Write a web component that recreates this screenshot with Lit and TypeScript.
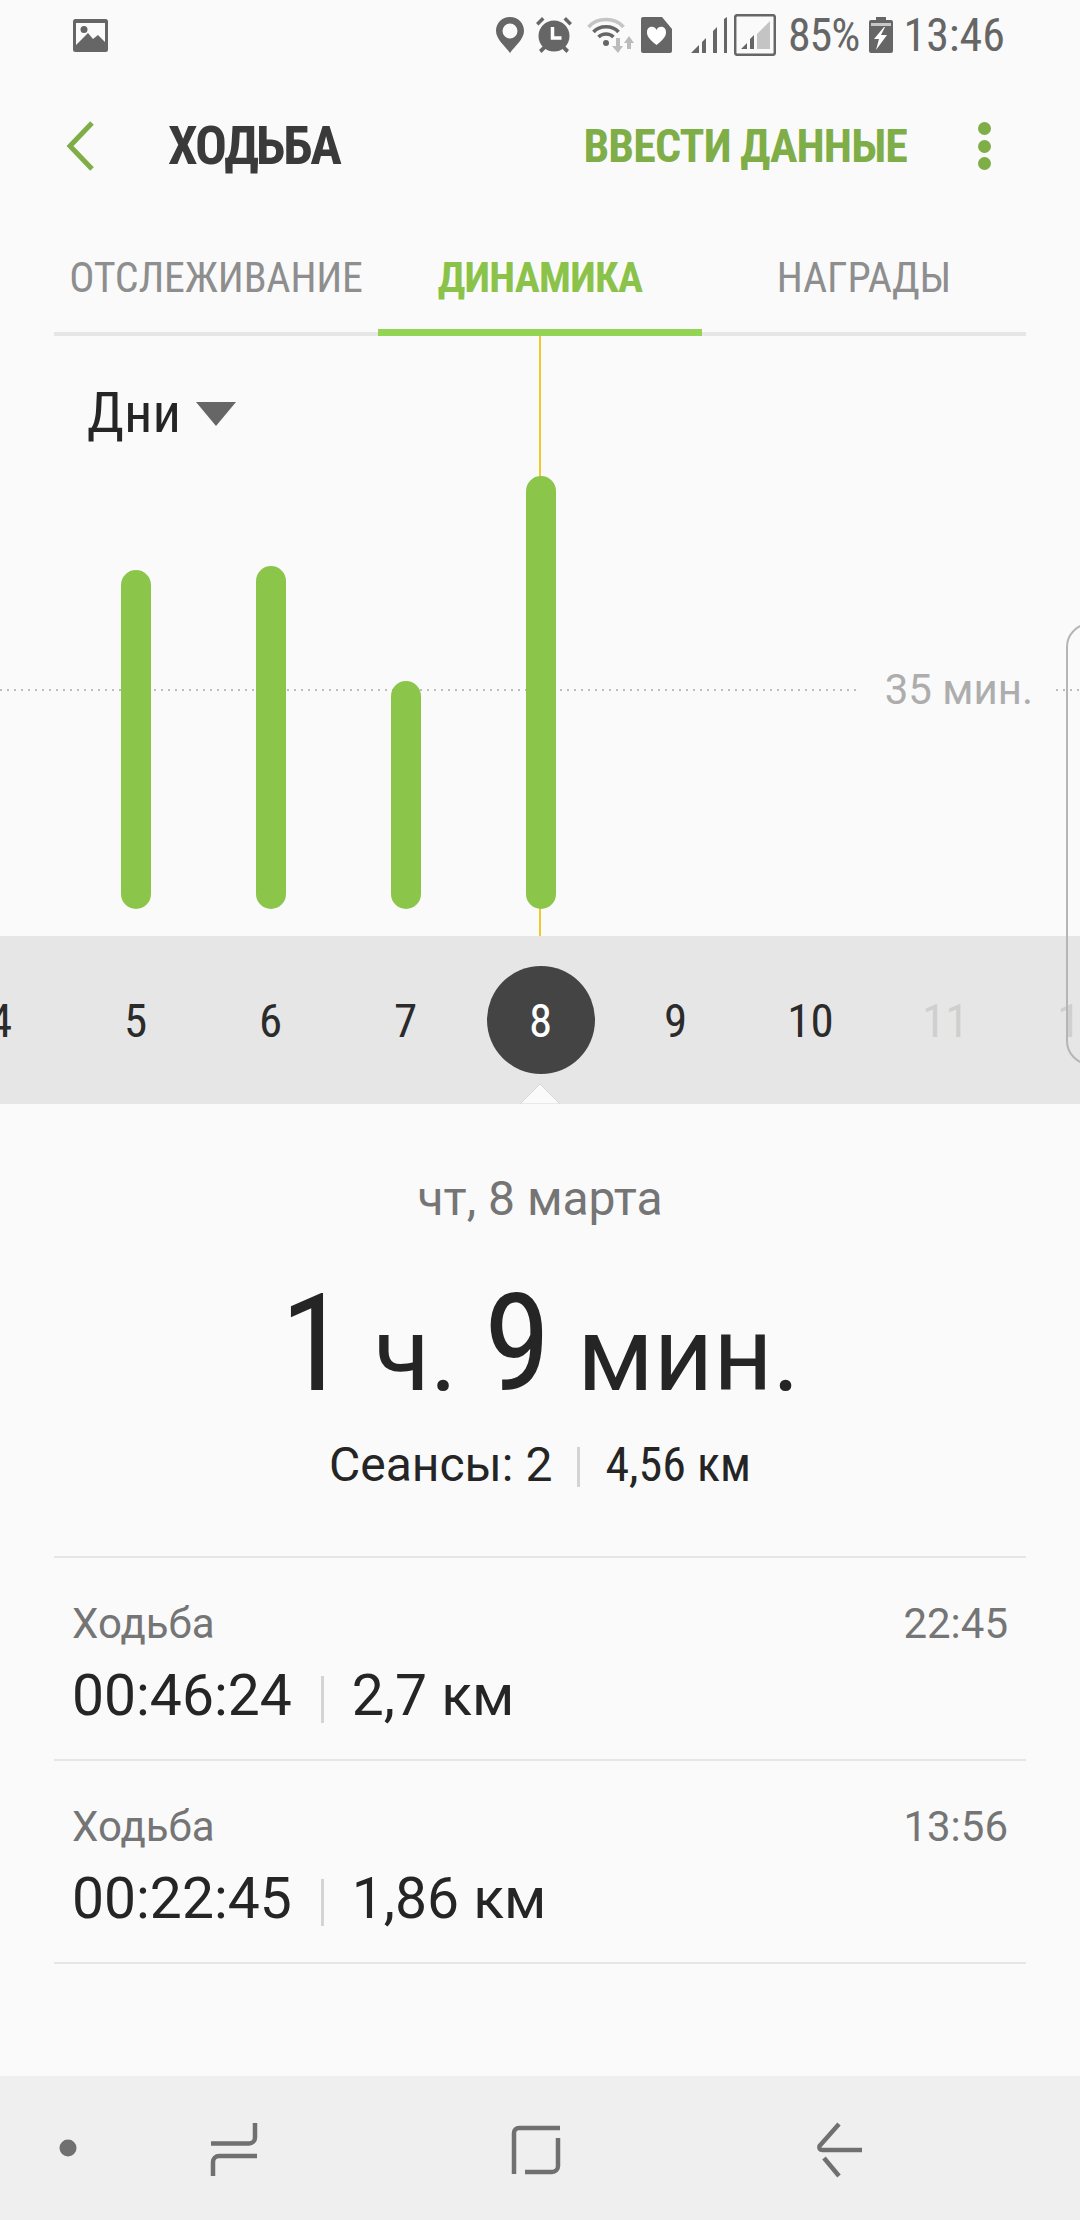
import { LitElement, html, css, svg } from "lit";
import { customElement } from "lit/decorators.js";

const bars = [
  { day: "5", h: 339 },
  { day: "6", h: 343 },
  { day: "7", h: 228 },
  { day: "8", h: 433 },
];
const days = [
  { d: "4", c: "" },
  { d: "5", c: "" },
  { d: "6", c: "" },
  { d: "7", c: "" },
  { d: "8", c: "sel" },
  { d: "9", c: "" },
  { d: "10", c: "" },
  { d: "11", c: "off" },
  { d: "12", c: "off" },
];
const sessions = [
  { t: "22:45", dur: "00:46:24", km: "2,7 км" },
  { t: "13:56", dur: "00:22:45", km: "1,86 км" },
];

@customElement("app-root")
export class AppRoot extends LitElement {
  static styles = css`
    :host { display: block; width: 1080px; height: 2220px; background: #fafafa; font-family: Roboto, sans-serif; overflow: hidden; position: relative; color: #252525; }
    .status { height: 70px; display: flex; align-items: center; padding: 0 75px 0 73px; color: #666; }
    .status svg { display: block; flex: none; }
    .status .right { margin-left: auto; display: flex; align-items: center; font-size: 46px; font-stretch: 75%; height: 70px; }
    .status .pct { margin: 0 10px 0 12px; letter-spacing: -1px; }
    .status .clock { margin-left: 10px; }
    .header { height: 152px; display: flex; align-items: center; }
    .back { margin-left: 66px; width: 30px; height: 52px; flex: none; }
    .title { margin-left: 72px; font-size: 53px; font-weight: 700; font-stretch: 75%; letter-spacing: -2px; color: #3a3a3a; }
    .action { margin-left: auto; font-size: 46px; font-weight: 700; font-stretch: 75%; letter-spacing: -0.9px; color: #7fae48; }
    .more { margin: 0 89px 0 70px; width: 14px; height: 48px; display: flex; flex-direction: column; justify-content: space-between; align-items: center; }
    .more i { width: 13px; height: 13px; border-radius: 50%; background: #7fae48; display: block; }
    .tabs { margin: 0 54px; height: 114px; display: flex; border-bottom: 4px solid #e6e6e6; box-sizing: border-box; }
    .tab { font-size: 42px; font-stretch: 75%; letter-spacing: -0.2px; color: #8e8e8e; display: flex; align-items: center; justify-content: center; flex: 1; position: relative; }
    .tab.on { color: #8bc34a; font-weight: 700; letter-spacing: -0.7px; }
    .tab.on::after { content: ""; position: absolute; left: 0; right: 0; bottom: -4px; height: 7px; background: #94d454; }
    .chart { height: 600px; position: relative; }
    .range { position: absolute; left: 87px; top: 44px; display: flex; align-items: center; gap: 15px; font-size: 56px; font-stretch: 75%; color: #252525; }
    .range i { width: 0; height: 0; border-left: 20px solid transparent; border-right: 20px solid transparent; border-top: 24px solid #666; margin-top: 2px; }
    .now { position: absolute; left: 539px; top: 0; bottom: 0; width: 2px; background: #f0c92a; }
    .goal { position: absolute; left: 0; right: 0; top: 332px; height: 44px; display: flex; align-items: center; }
    .goal .dots { flex: 1; height: 2px; background: repeating-linear-gradient(90deg, #bdbdbd 0 2px, transparent 2px 7px); }
    .goal .dots.end { flex: none; width: 24px; }
    .goal span { font-size: 42px; line-height: 44px; color: #adadad; margin: 0 23px 0 25px; }
    .barrow { position: absolute; left: 68px; bottom: 27px; display: flex; align-items: flex-end; }
    .col { width: 135px; display: flex; justify-content: center; }
    .bar { width: 30px; background: #8bc64b; border-radius: 15px; }
    .strip { height: 168px; background: #e6e6e6; position: relative; overflow: hidden; }
    .dayrow { display: flex; position: absolute; left: -67px; top: 0; height: 168px; }
    .day { width: 135px; display: flex; align-items: center; justify-content: center; font-size: 47px; font-stretch: 75%; color: #2b2b2b; }
    .day.off { color: #cfcfcf; }
    .day.sel b { width: 108px; height: 108px; border-radius: 50%; background: #444; color: #fff; font-weight: 400; display: flex; align-items: center; justify-content: center; }
    .notch { position: absolute; left: 520px; bottom: 0; width: 40px; height: 20px; }
    .sum { text-align: center; }
    .date { margin-top: 67px; font-size: 48px; color: #757575; line-height: 56px; }
    .big { margin-top: 37px; height: 160px; line-height: 160px; font-size: 103px; word-spacing: 1px; color: #252525; white-space: nowrap; }
    .big b { font-weight: 400; font-size: 136px; font-stretch: 75%; }
    .meta { margin-top: 14px; display: flex; justify-content: center; align-items: center; font-size: 48px; line-height: 54px; color: #252525; }
    .meta .s2 { font-stretch: 75%; }
    .sep { display: inline-block; width: 3px; height: 40px; background: #d4d4d4; margin: 4px 25px 0 25px; }
    .list { margin: 64px 54px 0; border-top: 2px solid #e6e6e6; }
    .row { height: 203px; box-sizing: border-box; border-bottom: 2px solid #e6e6e6; padding: 42px 18px 0; }
    .r1 { display: flex; justify-content: space-between; font-size: 42px; line-height: 48px; color: #757575; }
    .r2 { margin-top: 15px; display: flex; align-items: center; font-size: 57px; line-height: 66px; color: #252525; }
    .r2 .sep { height: 47px; margin: 6px 28px 0 29px; }
    .nav { position: absolute; left: 0; right: 0; bottom: 0; height: 144px; background: #efefef; }
    .nav svg { display: block; }
    .handle { position: absolute; left: 1066px; top: 623px; width: 40px; height: 442px; border: 2px solid #b5b5b5; border-radius: 24px 0 0 24px; box-sizing: border-box; }
  `;

  statusIcons() {
    return html`
      <svg width="28" height="36" viewBox="0 0 28 36"><path fill="#666" fill-rule="evenodd" d="M14 0C6 0 0 6 0 14c0 8 9 15 14 22 5-7 14-14 14-22C28 6 22 0 14 0Zm0 6.500a7.500 7.500 0 1 1 0 15 7.500 7.500 0 0 1 0-15Z"/></svg>
      <svg style="margin-left:12px" width="36" height="36" viewBox="0 0 36 36"><path fill="#666" d="M6 0l2.500 2.500L2.500 8.500 0 6ZM30 0l-2.500 2.500 6 6L36 6ZM8 28l-5 5 2.500 3 5-5ZM28 28l5 5-2.500 3-5-5Z"/><circle cx="18" cy="19" r="15.500" fill="#666"/><path fill="none" stroke="#fff" stroke-width="3.500" d="M16.500 10v11h9"/></svg>
      <svg style="margin-left:15px" width="47" height="36" viewBox="0 0 47 36"><path fill="none" stroke="#c4c4c4" stroke-width="3.500" d="M1.500 10C10 0 28 0 36.500 10"/><path fill="none" stroke="#666" stroke-width="3.500" d="M6.500 15c6-7 19-7 25 0M11.500 20c4-4 11-4 15 0"/><circle cx="19" cy="26" r="3" fill="#666"/><path fill="#bbb" d="M31 36l-6-7h4v-8h4v8h3ZM42 19l5 7h-3v6h-4v-6h-3Z"/></svg>
      <svg style="margin-left:7px" width="31" height="36" viewBox="0 0 31 36"><path fill="#666" fill-rule="evenodd" d="M2 0h19l10 12v22a2 2 0 0 1-2 2H2a2 2 0 0 1-2-2V2a2 2 0 0 1 2-2Z"/><path fill="#fff" d="M15.500 28C6 21 6 17 6 15c0-6 7.500-7 9.500-2 2-5 9.500-4 9.500 2 0 2 0 6-9.500 13Z"/></svg>
      <svg style="margin-left:19px" width="36" height="36" viewBox="0 0 36 36"><path fill="#666" d="M0 36 8 28v8ZM11 36V25l4-4v15ZM22 36V14l4-4v26ZM33 36V2l3-2v36Z"/></svg>
      <svg style="margin-left:7px" width="42" height="42" viewBox="0 0 42 42"><rect x="1.200" y="1.200" width="39.600" height="39.600" rx="2" fill="none" stroke="#666" stroke-width="2.500"/><path fill="#c4c4c4" d="M23 35V20L36 7v28Z"/><path fill="#666" d="M7 35l6-6v6ZM16 35v-10l4-4v14Z"/></svg>
    `;
  }

  battery() {
    return html`<svg width="24" height="36" viewBox="0 0 24 36"><path fill="#666" d="M7 0h10v3h5a2 2 0 0 1 2 2v29a2 2 0 0 1-2 2H2a2 2 0 0 1-2-2V5a2 2 0 0 1 2-2h5Z"/><rect x="2" y="6" width="20" height="3" fill="#c8c8c8"/><path fill="#fff" d="M15 10 5 22h5l-3 11 11-15h-6l4-8Z"/></svg>`;
  }

  navIcons() {
    return svg`
      <circle cx="68" cy="72" r="8.500" fill="#707070"/>
      <g fill="none" stroke="#707070" stroke-width="4.500">
        <path d="M211 67.500h38a6 6 0 0 0 6-6V47" />
        <path d="M257 80h-38a6 6 0 0 0-6 6v14" />
        <path d="M560 52h-41a5 5 0 0 0-5 5v41" />
        <path d="M525 96h27a6 6 0 0 0 6-6V62" />
        <path d="M839 48 819.500 70q-1 4 3 4h39.500" />
        <path d="M824 82l15 18" />
      </g>`;
  }

  render() {
    return html`
      <div class="status">
        <svg width="35" height="33" viewBox="0 0 35 33"><rect width="35" height="33" rx="2.500" fill="#666"/><path fill="#fbfbfb" d="M3 4h29v19l-7-7-5 4-5-6L3 26Z"/><circle cx="11" cy="10.500" r="3.500" fill="#666"/></svg>
        <div class="right">
          ${this.statusIcons()}
          <span class="pct">85%</span>
          ${this.battery()}
          <span class="clock">13:46</span>
        </div>
      </div>
      <div class="header">
        <svg class="back" viewBox="0 0 30 52"><path d="M26 3 4 26l22 23" fill="none" stroke="#7fae48" stroke-width="5"/></svg>
        <div class="title">ХОДЬБА</div>
        <div class="action">ВВЕСТИ ДАННЫЕ</div>
        <div class="more"><i></i><i></i><i></i></div>
      </div>
      <div class="tabs">
        <div class="tab">ОТСЛЕЖИВАНИЕ</div>
        <div class="tab on">ДИНАМИКА</div>
        <div class="tab">НАГРАДЫ</div>
      </div>
      <div class="chart">
        <div class="now"></div>
        <div class="range">Дни<i></i></div>
        <div class="goal"><div class="dots"></div><span>35 мин.</span><div class="dots end"></div></div>
        <div class="barrow">
          ${bars.map((b) => html`<div class="col"><div class="bar" style="height:${b.h}px"></div></div>`)}
        </div>
      </div>
      <div class="strip">
        <div class="dayrow">
          ${days.map((d) => html`<div class="day ${d.c}">${d.c === "sel" ? html`<b>${d.d}</b>` : d.d}</div>`)}
        </div>
        <svg class="notch" viewBox="0 0 40 20"><path d="M0 20 20 0l20 20Z" fill="#fafafa" stroke="#d8d8d8" stroke-width="1"/></svg>
      </div>
      <div class="sum">
        <div class="date">чт, 8 марта</div>
        <div class="big"><b>1</b> ч. <b>9</b> мин.</div>
        <div class="meta"><span>Сеансы: 2</span><i class="sep"></i><span class="s2">4,56 км</span></div>
      </div>
      <div class="list">
        ${sessions.map(
          (s) => html`<div class="row">
            <div class="r1"><span>Ходьба</span><span>${s.t}</span></div>
            <div class="r2"><span>${s.dur}</span><i class="sep"></i><span>${s.km}</span></div>
          </div>`
        )}
      </div>
      <div class="handle"></div>
      <div class="nav"><svg width="1080" height="144" viewBox="0 0 1080 144">${this.navIcons()}</svg></div>
    `;
  }
}
